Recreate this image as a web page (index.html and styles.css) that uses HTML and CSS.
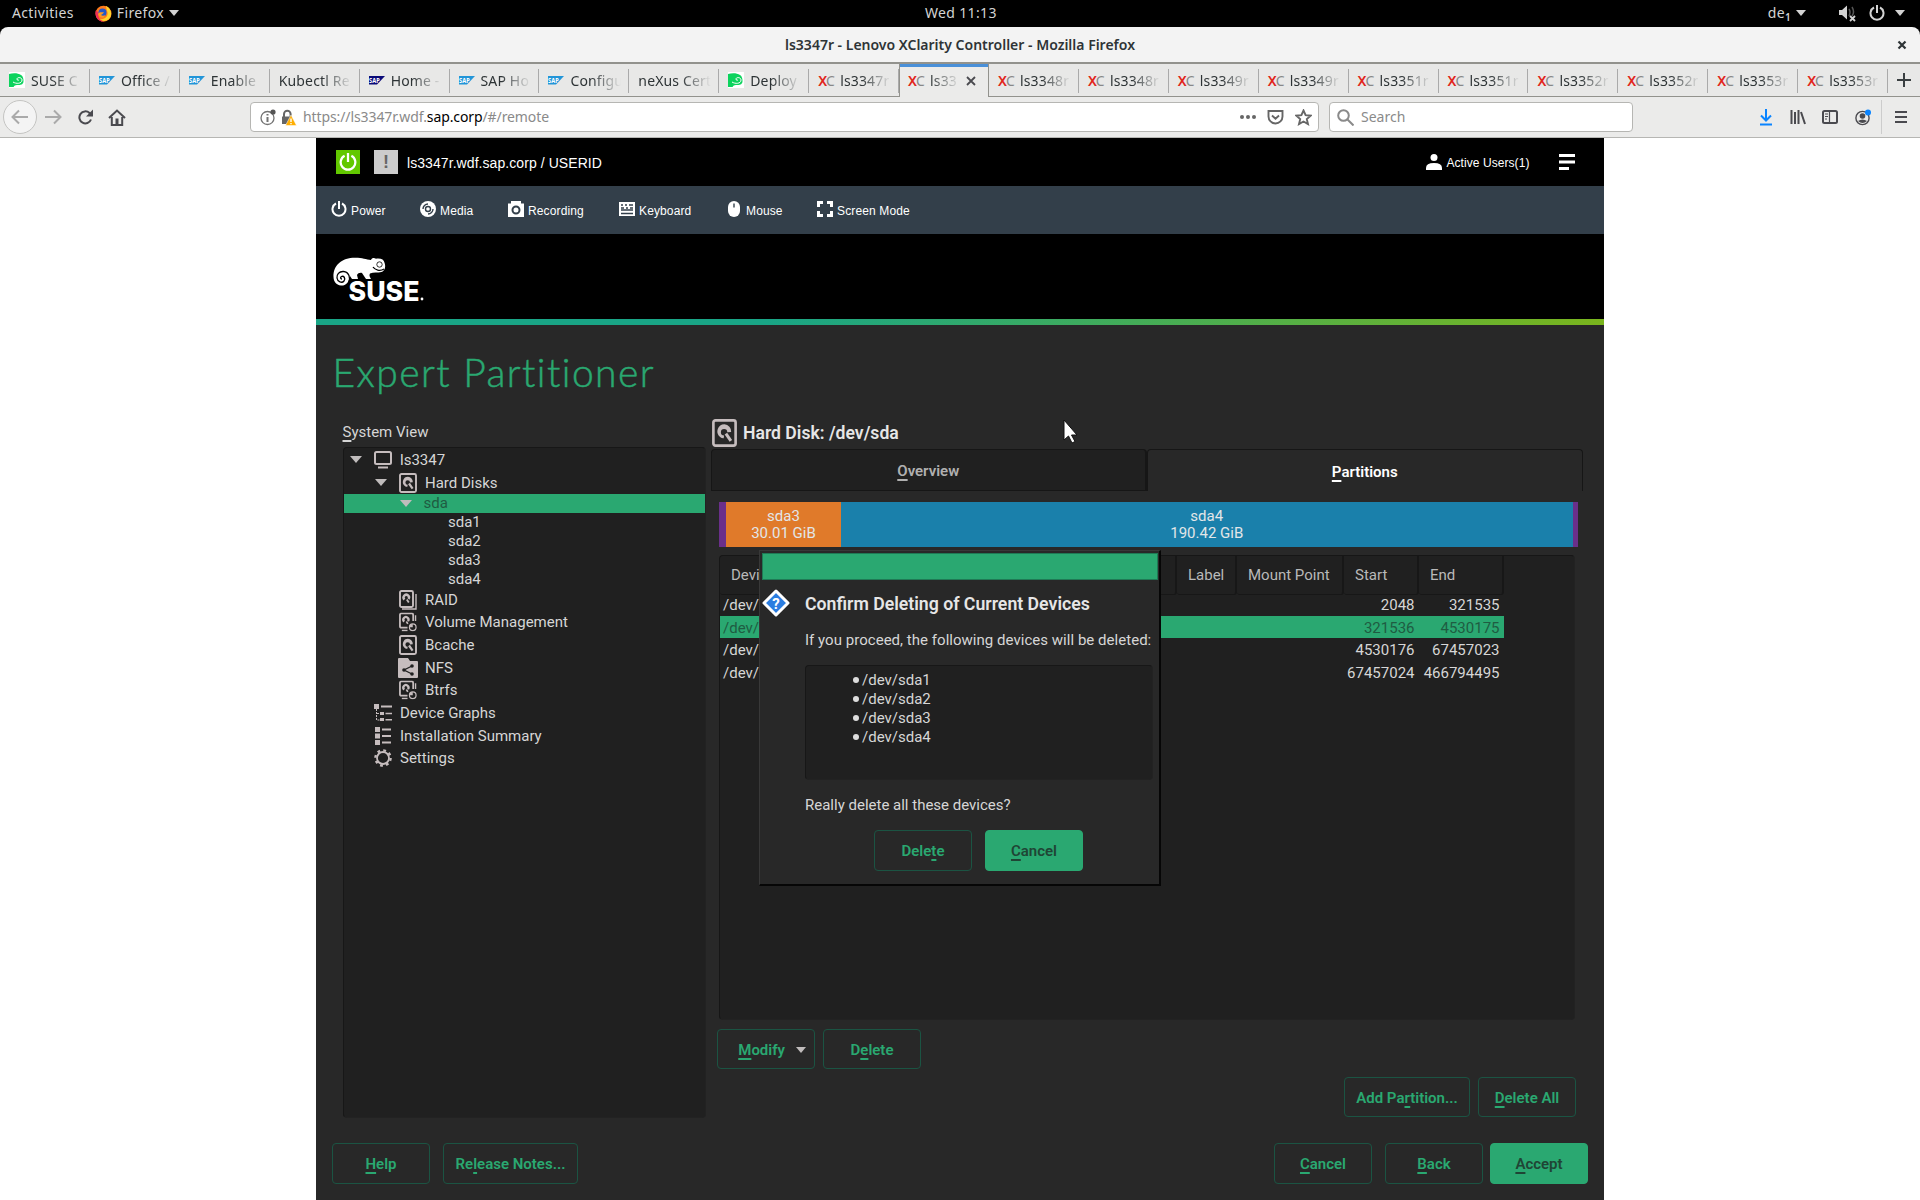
FILE: index.html
```html
<!DOCTYPE html>
<html lang="en">
<head>
<meta charset="utf-8">
<title>ls3347r - Lenovo XClarity Controller</title>
<link rel="stylesheet" href="styles.css">
</head>
<body>
<svg class="defs" width="0" height="0">
  <defs>
    <symbol id="sap" viewBox="0 0 16 10"><path d="M0 1h16L8 9.500H0z"/><text x="0" y="7.600" font-size="7" font-weight="700" textLength="11" lengthAdjust="spacingAndGlyphs" fill="#fff">SAP</text></symbol>
    <symbol id="suse" viewBox="0 0 16 16"><path fill="#fff" d="M0 0h16v16H0z"/><path fill="#0cd35d" d="M0 2c4-1 9-1 12 1 2 1 2.500 4 2.500 6 0 3-2 4-5 4-2 0-4 0-5 2H0z"/><path fill="none" stroke="#fff" d="M4 10c3 2 9 2 9-2 0-3-5-3-5-1 0 2 2 1 2 1"/></symbol>
    <symbol id="disk" viewBox="0 0 18 20"><rect x="1" y="1" width="16" height="18" rx="1.500" fill="none" stroke="#c6bdbe" stroke-width="1.900"/><path fill="#c6bdbe" d="M9 3.800a5.100 5.100 0 0 0-3.200 9.100q1.200 1 2.600.9l.3-2A2.300 2.300 0 1 1 11 9.500l2.800-.3A5.100 5.100 0 0 0 9 3.800z"/><path stroke="#c6bdbe" stroke-width="2.200" d="M10 10.500l3.600 5.200"/></symbol>
    <symbol id="raid" viewBox="0 0 18 20"><rect x="1" y="1" width="13" height="16" rx="1.500" fill="none" stroke="#c6bdbe" stroke-width="1.900"/><path fill="none" stroke="#c6bdbe" stroke-width="1.400" d="M17 4v15H3"/><path fill="none" stroke="#c6bdbe" stroke-width="2.400" d="M5.500 9.500a2.700 2.700 0 1 1 4-.5"/><path stroke="#c6bdbe" stroke-width="1.800" d="M7.800 9.500l2 3"/></symbol>
    <symbol id="vol" viewBox="0 0 19 20"><path fill="none" stroke="#c6bdbe" stroke-width="1.900" d="M9 16H2.500Q1 16 1 14.500v-12Q1 1 2.500 1h11Q15 1 15 2.500V9"/><path fill="none" stroke="#c6bdbe" stroke-width="1.400" d="M17.500 3v6M3 19h6"/><path fill="none" stroke="#c6bdbe" stroke-width="2.400" d="M5.500 9.500a2.700 2.700 0 1 1 4-.5"/><path stroke="#c6bdbe" stroke-width="1.800" d="M7.800 9.500l1.500 2.500"/><circle cx="14.500" cy="15.500" r="3.500" fill="none" stroke="#c6bdbe" stroke-width="1.300"/><path fill="#c6bdbe" d="M14.500 12v3.500H11A3.500 3.500 0 0 1 14.500 12z"/></symbol>
    <symbol id="power" viewBox="0 0 16 16"><path fill="none" stroke="currentColor" stroke-width="2" d="M5 2.500a6.500 6.500 0 1 0 6 0M8 0v8"/></symbol>
  </defs>
</svg>

<header class="topbar">
  <span class="activities">Activities</span>
  <svg class="fox" width="17" height="17" viewBox="0 0 17 17"><circle cx="8.500" cy="8.700" r="8" fill="#ff7a1a"/><path fill="#ffd42a" d="M11 1c5 2 7 9 3 13-3 3-8 2-9 0 6 1 9-4 7-8z"/><path fill="#ee2a5a" d="M1 5c-2 6 2 12 8 11.700C4 15 3 12 3.500 8z"/><circle cx="7.500" cy="7.500" r="4" fill="#2458c9"/><path fill="#ff9a20" d="M3 9c2-3 4-1 6-2-1 2-2 2-3 3 1 1 3 1 4 0-1 4-6 3-7-1z"/></svg>
  <span class="app">Firefox</span><i class="caret"></i>
  <span class="clock">Wed 11:13</span>
  <div class="status">
    <span>de<small>1</small></span><i class="caret"></i>
    <svg class="sound" width="18" height="18" viewBox="0 0 18 18"><path fill="#d3d3d3" d="M0 6h3l5-4.500v14L3 11H0z"/><path fill="none" stroke="#555" stroke-width="1.500" d="M10 5q2 3 0 7M13 3q3 5 0 9"/><path stroke="#d3d3d3" stroke-width="1.800" d="M11 12l5 5m0-5l-5 5"/></svg>
    <svg class="pw" width="16" height="16"><use href="#power"/></svg><i class="caret"></i>
  </div>
</header>
<div class="window">
  <div class="titlebar"><span>ls3347r - Lenovo XClarity Controller - Mozilla Firefox</span><svg width="10" height="10" viewBox="0 0 10 10"><path d="M1.500 1.500l7 7m0-7l-7 7"/></svg></div>
  <nav class="tabs">
    <div class="tab"><svg><use href="#suse"/></svg><span>SUSE C</span></div>
    <div class="tab"><svg class="blue"><use href="#sap"/></svg><span>Office /</span></div>
    <div class="tab"><svg class="blue"><use href="#sap"/></svg><span>Enable</span></div>
    <div class="tab"><span>Kubectl Re</span></div>
    <div class="tab"><svg class="navy"><use href="#sap"/></svg><span>Home -</span></div>
    <div class="tab"><svg class="blue"><use href="#sap"/></svg><span>SAP Ho</span></div>
    <div class="tab"><svg class="blue"><use href="#sap"/></svg><span>Configu</span></div>
    <div class="tab"><span>neXus Cert</span></div>
    <div class="tab"><svg><use href="#suse"/></svg><span>Deploy</span></div>
    <div class="tab"><em>X<i>C</i></em><span>ls3347r</span></div>
    <div class="tab active"><em>X<i>C</i></em><span>ls33</span><svg class="x" viewBox="0 0 10 10"><path d="M1 1l8 8m0-8L1 9"/></svg></div>
    <div class="tab"><em>X<i>C</i></em><span>ls3348r</span></div>
    <div class="tab"><em>X<i>C</i></em><span>ls3348r</span></div>
    <div class="tab"><em>X<i>C</i></em><span>ls3349r</span></div>
    <div class="tab"><em>X<i>C</i></em><span>ls3349r</span></div>
    <div class="tab"><em>X<i>C</i></em><span>ls3351r</span></div>
    <div class="tab"><em>X<i>C</i></em><span>ls3351r</span></div>
    <div class="tab"><em>X<i>C</i></em><span>ls3352r</span></div>
    <div class="tab"><em>X<i>C</i></em><span>ls3352r</span></div>
    <div class="tab"><em>X<i>C</i></em><span>ls3353r</span></div>
    <div class="tab"><em>X<i>C</i></em><span>ls3353r</span></div>
    <div class="plus"><svg width="14" height="14"><path d="M7 0v14M0 7h14"/></svg></div>
  </nav>
  <div class="navbar">
    <div class="back"><svg width="18" height="16" viewBox="0 0 18 16"><path d="M17 8H2M8 1.500L1.500 8 8 14.500"/></svg></div>
    <svg class="fwd" width="18" height="16" viewBox="0 0 18 16"><path d="M1 8h15M10 1.500L16.500 8 10 14.500"/></svg>
    <svg class="dark reload" width="17" height="16" viewBox="0 0 17 16"><path d="M14 10.500A6 6 0 1 1 12.500 4L15 6.500"/><path class="fill" d="M16 .5v7H9z"/></svg>
    <svg class="dark home" width="18" height="17" viewBox="0 0 18 17"><path d="M1 9l8-7.500L17 9M3.800 8v8h10.400V8"/><path class="fill" d="M7.500 9.500h3V16h-3z"/></svg>
    <div class="url">
      <svg width="16" height="17" viewBox="0 0 16 17"><circle cx="7.500" cy="9" r="6.500" fill="none" stroke="#737373" stroke-width="1.300"/><path stroke="#737373" stroke-width="2" d="M7.500 8v5M7.500 5v1.600"/><circle cx="13" cy="3" r="2.600" fill="#555"/></svg>
      <svg class="lock" width="16" height="17" viewBox="0 0 16 17"><path fill="none" stroke="#666" stroke-width="2" d="M3 8V5a3.300 3.300 0 0 1 6.600 0v3"/><path fill="#666" d="M1 7.500h9V15H1z"/><path fill="#ffae00" stroke="#fff" stroke-width=".5" d="M10 6l5.500 10.500h-11z"/><path stroke="#fff" stroke-width="1.400" d="M10 9.500v3.500m0 1v1.300"/></svg>
      <span>https://ls3347r.wdf.<b>sap.corp</b>/#/remote</span>
      <svg class="dots" width="18" height="6"><circle cx="3" cy="3" r="2"/><circle cx="9" cy="3" r="2"/><circle cx="15" cy="3" r="2"/></svg>
      <svg class="pocket" width="17" height="15" viewBox="0 0 17 15"><path d="M1.500 1h14v5.500a7 7 0 0 1-14 0zM5 5.500l3.500 3.300L12 5.500"/></svg>
      <svg class="star" width="17" height="17" viewBox="0 0 17 17"><path d="M8.500 1.500l2.100 4.700 5.100.5-3.900 3.400 1.200 5-4.500-2.600L4 15.100l1.200-5L1.300 6.700l5.100-.5z"/></svg>
    </div>
    <div class="search"><svg width="17" height="17" viewBox="0 0 17 17"><circle cx="6.500" cy="6.500" r="5.300"/><path d="M10.500 10.500l6 6"/></svg><span>Search</span></div>
    <div class="tools">
      <svg width="14" height="17" viewBox="0 0 14 17"><path fill="none" stroke="#0a84ff" stroke-width="2" d="M7 0v11M2 6.500l5 5 5-5M1 15.500h12"/></svg>
      <svg width="16" height="15" viewBox="0 0 16 15"><path fill="none" stroke="#4a4a4f" stroke-width="2" d="M1.500 0v14M5 2v12M8.500 0v14M11 2l4 12"/></svg>
      <svg width="16" height="14" viewBox="0 0 16 14"><rect x="1" y="1" width="14" height="12" rx="1.500" fill="none" stroke="#4a4a4f" stroke-width="2"/><path stroke="#4a4a4f" stroke-width="1.200" d="M7.500 1v12M3 4h3M3 6.500h3M3 9h2"/></svg>
      <svg width="17" height="17" viewBox="0 0 17 17"><circle cx="7.500" cy="9" r="6.600" fill="none" stroke="#4a4a4f" stroke-width="1.400"/><circle cx="7.500" cy="7" r="2.800" fill="#4a4a4f"/><path class="bust" d="M3 12q4.500-3 9 0-4.500 4-9 0z"/><circle cx="13" cy="3.500" r="3" fill="#0a84ff"/></svg>
    </div>
    <div class="menu"><svg width="12" height="14"><path stroke="#4a4a4f" stroke-width="2" d="M0 2h12M0 7h12M0 12h12"/></svg></div>
  </div>
</div>

<main class="remote">
  <div class="xcc">
    <span class="sq green"><svg width="18" height="18" viewBox="0 0 16 16"><use href="#power"/></svg></span>
    <span class="sq grey">!</span>
    <span class="host">ls3347r.wdf.sap.corp / USERID</span>
    <svg class="user" width="16" height="16" viewBox="0 0 16 16"><circle cx="8" cy="3.500" r="3.500"/><path d="M0 16v-2q0-5 8-5t8 5v2z"/></svg>
    <span class="active-users">Active Users(1)</span>
    <svg class="burger" width="16" height="16"><path d="M0 0h16v3H0zM0 6.500h16v3H0zM0 13h10v3H0z"/></svg>
  </div>
  <div class="actions">
    <div class="act p"><svg width="16" height="16"><use href="#power"/></svg><span>Power</span></div>
    <div class="act m"><svg width="16" height="16" viewBox="0 0 16 16"><circle cx="8" cy="8" r="8"/><path class="ink" d="M3 8a5 5 0 0 1 5-5M13 8a5 5 0 0 1-5 5"/><circle class="ink" cx="8" cy="8" r="2.500"/></svg><span>Media</span></div>
    <div class="act r"><svg width="16" height="16" viewBox="0 0 16 16"><path d="M0 2.500h3V0h10v2.500h3V16H0z"/><circle class="ink lens" cx="8" cy="9" r="3.500"/></svg><span>Recording</span></div>
    <div class="act k"><svg width="16" height="16" viewBox="0 0 16 16"><path d="M0 1h16v14H0z"/><path class="ink" d="M2 4h2m2 0h2m2 0h4M2 7h3m2 0h2m2 0h3M2 9h12M2 12.500h12"/></svg><span>Keyboard</span></div>
    <div class="act o"><svg width="12" height="16" viewBox="0 0 12 16"><rect width="12" height="16" rx="6"/><path class="ink" d="M6 2.500v4"/></svg><span>Mouse</span></div>
    <div class="act s"><svg width="16" height="16" viewBox="0 0 16 16"><path d="M0 0h6v3H3v3H0zM10 0h6v6h-3V3h-3zM0 10h3v3h3v3H0zM13 10h3v6h-6v-3h3z"/></svg><span>Screen Mode</span></div>
  </div>
  <div class="brand">
    <svg width="92" height="48" viewBox="0 0 92 48"><path fill="#fff" d="M.500 21C0 9 9 1.800 22 1.700c7-.1 11 1.800 16 2.300 1-2.300 3-2.500 5-1.300 5-.7 8 1 8.500 4 1.500 4 .5 8-3 9.300-4 1-8 0-11.500 1.500-1 1.500-.5 3 1 5.500h-5l-4-6c-2.500-.5-4 .5-5 2l1 4h-6l-2-3c-1 7-5 10-9 9.500C3 29 .7 25.500.500 21z"/><path fill="none" stroke="#000" stroke-width="1.300" d="M15.500 27c2.500-5 .5-11-5-11.500-4.500-.3-7 3-6.500 6.500.5 4 5 5.500 7 3 2-3-.5-5.500-2.500-4.500-1.500 1-1 2.500.5 2.500M40 11c2 3 7 4.500 11 2"/><circle cx="46.500" cy="8.500" r="2.700" fill="none" stroke="#000" stroke-width=".8"/><text x="15.500" y="44.500" textLength="71" lengthAdjust="spacingAndGlyphs" class="wordmark">SUSE</text><circle cx="89" cy="43" r="1.400" fill="#fff"/></svg>
  </div>
  <div class="yast">
    <h1>Expert Partitioner</h1>
    <div class="columns">
      <section class="side">
        <div class="label"><span><u>S</u>ystem View</span></div>
        <div class="tree">
          <div class="row l0"><i class="tri"></i><svg width="18" height="18" viewBox="0 0 18 18"><rect x="1" y="1" width="16" height="12" rx="1.500" fill="none" stroke="#c6bdbe" stroke-width="2"/><path stroke="#c6bdbe" stroke-width="2" d="M4 16.500h10"/></svg><span>ls3347</span></div>
          <div class="row l1"><i class="tri"></i><svg width="18" height="20"><use href="#disk"/></svg><span>Hard Disks</span></div>
          <div class="row l2 sel"><i class="tri"></i><span>sda</span></div>
          <div class="row l3"><span>sda1</span></div>
          <div class="row l3"><span>sda2</span></div>
          <div class="row l3"><span>sda3</span></div>
          <div class="row l3"><span>sda4</span></div>
          <div class="row l1"><i></i><svg width="18" height="20"><use href="#raid"/></svg><span>RAID</span></div>
          <div class="row l1"><i></i><svg width="18" height="20" viewBox="0 0 19 20"><use href="#vol"/></svg><span>Volume Management</span></div>
          <div class="row l1"><i></i><svg width="18" height="20"><use href="#disk"/></svg><span>Bcache</span></div>
          <div class="row l1 wide"><i></i><svg width="20" height="20" viewBox="0 0 20 20"><path fill="#c6bdbe" d="M0 1q0-1 1-1h9l2 3h7q1 0 1 1v15q0 1-1 1H1q-1 0-1-1z"/><path fill="none" stroke="#202020" stroke-width="1.300" d="M14 8l-8 4 8 4"/><g fill="#202020"><circle cx="14" cy="8" r="1.800"/><circle cx="6" cy="12" r="1.800"/><circle cx="14" cy="16" r="1.800"/></g></svg><span>NFS</span></div>
          <div class="row l1"><i></i><svg width="18" height="20" viewBox="0 0 19 20"><use href="#vol"/></svg><span>Btrfs</span></div>
          <div class="row l0"><i></i><svg width="18" height="18" viewBox="0 0 18 18"><path fill="#c6bdbe" d="M0 0h5v5H0zM7 1.500h11v2H7zM6 8h4v3H6zM11.500 8.700H18v1.600h-6.500zM6 14h4v3H6zM11.500 15H18v1.600h-6.500z"/><path fill="none" stroke="#c6bdbe" stroke-dasharray="2 1" d="M2.500 5v11H6M3 9.500h3"/></svg><span>Device Graphs</span></div>
          <div class="row l0"><i></i><svg width="18" height="18" viewBox="0 0 18 18"><path fill="#c6bdbe" d="M1 0h5v5H1zM1 6.500h5v5H1zM1 13h5v5H1zM8 1.500h9v2H8zM8 8h9v2H8zM8 14.500h9v2H8z"/></svg><span>Installation Summary</span></div>
          <div class="row l0"><i></i><svg width="18" height="18" viewBox="0 0 18 18"><circle cx="9" cy="9" r="6" fill="none" stroke="#c6bdbe" stroke-width="1.800"/><circle cx="9" cy="9" r="7.600" fill="none" stroke="#c6bdbe" stroke-width="2.400" stroke-dasharray="2.800 3.170"/></svg><span>Settings</span></div>
        </div>
      </section>
      <section class="content">
        <h2><svg width="25" height="28" viewBox="0 0 18 20" preserveAspectRatio="none"><use href="#disk"/></svg><span>Hard Disk: /dev/sda</span></h2>
        <div class="ptabs"><div class="pt off"><span><u>O</u>verview</span></div><div class="pt on"><span><u>P</u>artitions</span></div></div>
        <div class="usage"><div class="sys"></div><div class="s3"><span>sda3</span><span>30.01 GiB</span></div><div class="s4"><span>sda4</span><span>190.42 GiB</span></div><div class="sys"></div></div>
        <div class="grid">
          <div class="gh"><span>Devi</span><span>Label</span><span>Mount Point</span><span>Start</span><span>End</span></div>
          <div class="gr"><span>/dev/</span><span>2048</span><span>321535</span></div>
          <div class="gr sel"><span>/dev/</span><span>321536</span><span>4530175</span></div>
          <div class="gr"><span>/dev/</span><span>4530176</span><span>67457023</span></div>
          <div class="gr"><span>/dev/</span><span>67457024</span><span>466794495</span></div>
        </div>
        <div class="btns"><button class="modify"><span><u>M</u>odify</span><i class="tri"></i></button><button>D<u>e</u>lete</button></div>
        <div class="btns right"><button class="add">Add Pa<u>r</u>tition...</button><button><u>D</u>elete All</button></div>
      </section>
    </div>
    <footer>
      <button><u>H</u>elp</button><button class="notes">Re<u>l</u>ease Notes...</button>
      <button class="cancel"><u>C</u>ancel</button><button class="bk"><u>B</u>ack</button><button class="primary"><u>A</u>ccept</button>
    </footer>
  </div>
</main>

<div class="dialog">
  <div class="dbar"></div>
  <div class="dbody">
    <svg class="q" width="28" height="28" viewBox="0 0 28 28"><path fill="#2b7de0" stroke="#fff" stroke-width="3" stroke-linejoin="round" d="M14 2l12 12-12 12L2 14z"/><text x="14" y="19.500" text-anchor="middle" fill="#fff" font-size="15" font-weight="700">?</text></svg>
    <div class="dtext">
      <h3>Confirm Deleting of Current Devices</h3>
      <p class="intro">If you proceed, the following devices will be deleted:</p>
      <ul><li>/dev/sda1</li><li>/dev/sda2</li><li>/dev/sda3</li><li>/dev/sda4</li></ul>
      <p class="really">Really delete all these devices?</p>
    </div>
  </div>
  <div class="dbtns"><button>Dele<u>t</u>e</button><button class="primary"><u>C</u>ancel</button></div>
</div>
<svg class="cursor" width="16" height="26" viewBox="0 0 16 26"><path fill="#fff" stroke="#111" d="M1 1v20l4.500-4 3.500 7 3-1.500-3.500-6.500H14z"/></svg>
</body>
</html>
```
FILE: styles.css
```css
* { box-sizing: border-box; }
body { margin: 0; width: 1920px; height: 1200px; overflow: hidden; position: relative; background: #fff; font-family: "Noto Sans", sans-serif; }
svg { display: block; flex: none; }
.defs { position: absolute; }
button, h1, h2, h3, p, ul { margin: 0; padding: 0; font: inherit; }

/* desktop panel */
.topbar { display: flex; align-items: center; height: 27px; padding: 0 0 1px 12px; background: #000; color: #d3d3d3; font-size: 14px; letter-spacing: .35px; }
.topbar > span { padding-bottom: 2px; }
.fox { margin-left: 21px; margin-right: 5px; }
.caret { border: 5px solid transparent; border-top: 6px solid #d3d3d3; border-bottom: 0; margin-left: 5px; }
.clock { margin-left: 746px; }
.status { display: flex; align-items: center; margin-left: auto; padding-right: 15px; }
.status small { font-size: 10px; font-weight: 600; vertical-align: -3px; }
.sound { margin-left: 33px; }
.pw { margin: 0 6px 0 12px; }
.pw + .caret { margin-left: 4px; }

/* browser chrome */
.window { background: #000; }
.titlebar { display: flex; align-items: center; justify-content: center; position: relative; height: 37px; background: #f3f3f3; border-radius: 8px 8px 0 0; border-bottom: 2px solid #92928d; color: #2e3436; font-size: 14px; font-weight: 600; }
.titlebar svg { position: absolute; right: 13px; top: 13px; stroke: #2e3436; stroke-width: 2.200; }
.tabs { display: flex; height: 33px; background: #e8e8e7; border-bottom: 1px solid #92928d; }
.tab { position: relative; flex: 0 0 89.920px; display: flex; align-items: center; padding-left: 9px; overflow: hidden; font-size: 14px; letter-spacing: .15px; color: #2e3436; white-space: nowrap; }
.tab::after { content: ""; position: absolute; right: 0; top: 5px; bottom: 3px; width: 1px; background: #aaa; }
.tab svg { width: 16px; height: 16px; margin-right: 6px; }
.tab svg.blue { fill: #2295d8; }
.tab svg.navy { fill: #0a0a78; }
.tab span { flex: 1; overflow: hidden; margin-right: 8px; -webkit-mask-image: linear-gradient(90deg, #000 calc(100% - 30px), transparent); mask-image: linear-gradient(90deg, #000 calc(100% - 30px), transparent); }
.tab em { width: 16px; margin-right: 6px; font: 600 14px "Noto Sans", sans-serif; color: #e1251b; letter-spacing: -1px; }
.tab em i { font-style: normal; font-weight: 400; color: #888; }
.tab.active { height: 33px; background: #ebebea; border: 1px solid #92928d; border-width: 0 1px; padding-left: 8px; }
.tab.active::before { content: ""; position: absolute; left: 0; right: 0; top: 0; height: 3px; background: #4a90d9; }
.tab.active::after { display: none; }
.tab.active span { margin-right: 6px; }
.tab svg.x { width: 10px; height: 10px; margin-right: 12px; stroke: #4a4a4f; stroke-width: 1.800; }
.plus { flex: 1; display: flex; align-items: center; justify-content: center; }
.plus svg { stroke: #3a3f41; stroke-width: 2; }
.navbar { display: flex; align-items: center; height: 41px; background: #ebebea; border-bottom: 1px solid #b6b6b3; padding-left: 3px; }
.back { width: 34px; height: 34px; border: 1px solid #c4c4c2; border-radius: 50%; background: #f4f4f4; display: grid; place-items: center; }
.navbar path { fill: none; }
.back svg, .fwd { stroke: #aaa; stroke-width: 2; }
.fwd { margin-left: 7px; }
.dark { stroke: #4a4a4f; stroke-width: 2; }
.navbar .dark path.fill { fill: #4a4a4f; stroke: none; }
.navbar .bust { fill: #4a4a4f; }
.reload { margin-left: 15px; }
.home { margin-left: 14px; }
.url, .search { display: flex; align-items: center; height: 30px; background: #fff; border: 1px solid #b6b6b3; border-radius: 4px; font-size: 14px; color: #8a8a8a; }
.url span, .search span { padding-bottom: 2px; }
.url { width: 1069px; margin-left: 124px; padding-left: 9px; letter-spacing: -.1px; }
.url .lock { margin: 0 6px 0 5px; }
.navbar .lock path:nth-child(2) { fill: #666; }
.navbar .lock path:nth-child(3) { fill: #ffae00; }
.url b { font-weight: 400; color: #000; }
.dots { margin-left: auto; fill: #666; }
.pocket { margin-left: 10px; }
.star { margin: 0 6px 0 11px; }
.pocket, .star { stroke: #666; stroke-width: 1.900; }
.search { width: 304px; margin-left: 10px; padding-left: 7px; }
.search svg { fill: none; stroke: #8a8a8a; stroke-width: 2; margin-right: 7px; }
.tools { display: flex; align-items: center; gap: 16.700px; margin-left: 126px; }
.menu { margin-left: auto; width: 39px; height: 34px; border-left: 1px solid #ccc; display: flex; align-items: center; padding-left: 13px; }

/* remote console page */
.remote { width: 1288px; height: 1062px; margin: 0 0 0 316px; background: #282828; font-family: "Liberation Sans", sans-serif; }
.xcc { display: flex; align-items: center; height: 48px; background: #000; color: #fff; padding: 0 29.500px 0 20px; fill: #fff; font-size: 14px; }
.sq { width: 24px; height: 24px; display: grid; place-items: center; }
.green { background: #62c800; }
.grey { margin: 0 9px 0 14px; background: #ccc; color: #666; font-weight: 700; font-size: 18px; }
.host { letter-spacing: .07px; padding-top: 2px; }
.user { margin-left: auto; margin-right: 4px; }
.active-users { font-size: 12px; margin-right: 29px; letter-spacing: .07px; padding-top: 1px; }
.actions { display: flex; align-items: center; height: 48px; background: #333f4a; color: #fff; fill: #fff; font-size: 12px; letter-spacing: .13px; padding: 0 0 2px 15px; }
.act { display: flex; align-items: center; gap: 4px; }
.act span { padding-top: 3px; }
.ink { fill: none; stroke: #333f4a; stroke-width: 1.400; }
.lens { stroke-width: 2; }
.p { width: 89px; }
.m { width: 88px; }
.r { width: 111px; }
.k { width: 109px; }
.o { width: 89px; gap: 6px; }
.brand { height: 91px; background: #000; padding: 22px 0 0 17px; border-bottom: 6px solid; border-image: linear-gradient(90deg, #19a586 35%, #7ab51d) 1; }
.wordmark { font: 800 26.600px Inter, sans-serif; fill: #fff; }

/* installer */
.yast { font-family: Roboto, sans-serif; font-size: 15px; color: #d6d6d6; }
.yast u, .dialog u { text-underline-offset: 3px; text-decoration-thickness: 1.500px; text-decoration-skip-ink: none; }
h1 { height: 94px; padding: 23px 0 0 16.500px; font: 300 39px/48px Lato, sans-serif; letter-spacing: 1.450px; color: #2aa871; -webkit-text-stroke: .5px #2aa871; }
.columns { display: flex; gap: 5px; height: 704px; padding-left: 26.500px; }
.side { width: 363px; }
.label { height: 28px; line-height: 27px; }
.tree { height: 671px; background: #202020; border: 1px solid #171717; border-right-color: #222; border-bottom-color: #222; border-radius: 4px; padding-top: .600px; }
.row { display: flex; align-items: center; height: 22.670px; white-space: nowrap; }
.row svg { margin-right: 8px; }
.row > i { width: 12px; margin-right: 12px; }
.row.wide svg { margin-left: -1.500px; margin-right: 7.500px; }
.tri { border: 6px solid transparent; border-top: 7px solid #c0bcbc; border-bottom: 0; }
.l0 { padding-left: 6.500px; }
.l1 { padding-left: 31.500px; }
.l2 { padding-left: 56px; }
.l3 { padding-left: 104.500px; }
.l2, .l3 { height: 18.900px; }
.sel { background: #2aa871; color: #1f5c42; }
.content { width: 872px; }
h2 { display: flex; align-items: center; gap: 6px; height: 30px; padding: 0 0 3px 1.500px; font-size: 17.600px; font-weight: 600; color: #e6e6e6; }
.ptabs { display: flex; height: 42px; }
.pt { flex: 1; display: grid; place-items: center; border: 1px solid #161616; border-radius: 4px 4px 0 0; font-weight: 600; padding-top: 2px; }
.off { background: #202020; border-right-width: 2px; color: #b0b0b0; }
.on { border-bottom: 0; color: #fff; }
.usage { display: flex; height: 45px; margin: 11px 0 8px 8px; width: 859px; text-align: center; color: #e2e6e8; line-height: 17.500px; }
.usage span { display: block; }
.usage > div { padding-top: 5.500px; }
.sys { background: #6a2f8a; flex: 1; }
.sys:last-child { flex: 0 0 5px; }
.s3 { width: 115px; background: #e07a2a; }
.s4 { width: 731.500px; background: #1a80ab; }
.grid { height: 465px; margin-left: 8px; width: 856px; background: #202020; border: 1px solid #161616; border-right-color: #222; border-bottom-color: #222; border-radius: 4px; }
.gh { display: grid; grid-template-columns: 457px 60px 107px 75px 85px; height: 37px; width: 784px; line-height: 38px; color: #b9b9b9; }
.gh span { padding-left: 11.500px; border: 1px solid #171717; border-width: 0 2px 1px 0; border-radius: 0 0 3px 3px; }
.gr { display: grid; grid-template-columns: 1fr 100px 85px; height: 22.670px; line-height: 24px; width: 784px; padding: 0 4px 0 3.500px; text-align: right; }
.gr span:first-child { text-align: left; }
button { width: 98px; height: 40px; padding-top: 1px; border: 1.500px solid #1b5443; border-radius: 4px; background: none; color: #2aa871; font: 600 15px Roboto, sans-serif; }
.primary { background: #2aa871; border-color: #2aa871; color: #1f4535; }
.btns { display: flex; gap: 8px; padding-left: 6.500px; margin-top: 9px; }
.btns.right { justify-content: flex-end; margin-top: 8px; padding-right: 6.500px; }
.modify { display: flex; align-items: center; justify-content: flex-end; gap: 11px; padding-right: 8px; }
.modify .tri { border-width: 6px 5px 0; }
.add { width: 126px; }
footer { display: flex; padding: 20px 16px 0 16px; }
footer button { height: 41px; }
.notes { width: 135px; margin-left: 13px; }
.cancel { margin-left: auto; }
.bk { margin: 0 7px 0 13px; }

/* confirmation popup */
.dialog { position: absolute; left: 759px; top: 550px; width: 402px; height: 336px; background: #282828; border: 1px solid #383838; border-right: 2px solid #060606; border-bottom: 2px solid #060606; padding: 2px 1px 2px 2px; font-family: Roboto, sans-serif; font-size: 15px; color: #d6d6d6; }
.dbar { height: 27px; background: #2aa871; border: 1px solid #1f7a55; }
.dbody { display: flex; height: 250px; }
.q { margin-top: 9px; }
.dtext { padding-left: 15px; white-space: nowrap; }
h3 { font-size: 17.700px; font-weight: 600; line-height: 24px; margin-top: 12px; color: #e6e6e6; }
.intro { margin-top: 14px; line-height: 21px; letter-spacing: .03px; }
ul { list-style: none; width: 348px; height: 115px; margin-top: 14px; background: #202020; border: 1px solid #171717; border-right-color: #222; border-bottom-color: #222; border-radius: 4px; padding: 5px 0 0 46.500px; line-height: 18.900px; }
li { display: flex; align-items: center; gap: 3.500px; }
li::before { content: ""; width: 6px; height: 6px; border-radius: 50%; background: #ddd; }
.really { margin-top: 15px; line-height: 21px; }
.dbtns { display: flex; justify-content: center; gap: 13px; margin-left: 37px; }
.dbtns button { height: 41px; }
.cursor { position: absolute; left: 1063px; top: 419px; }
```
